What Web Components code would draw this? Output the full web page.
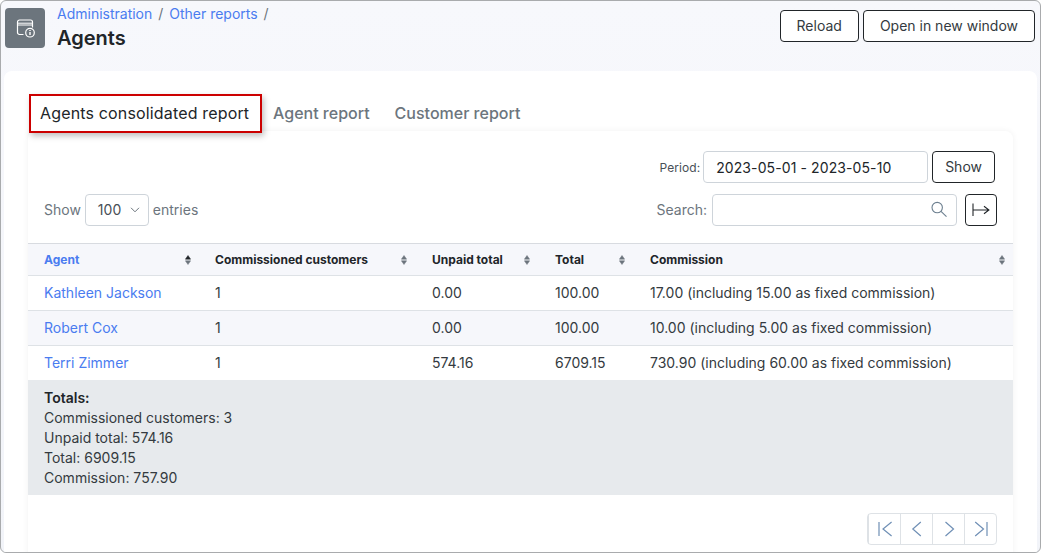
<!DOCTYPE html>
<html>
<head>
<meta charset="utf-8">
<title>Agents</title>
<style>
  html, body { margin: 0; height: 100%; overflow: hidden; }
  body { font-family: Inter, "Liberation Sans", sans-serif; font-size: 14px; color: #212529; background: #fff; }
</style>
</head>
<body>
<app-window>
  <page-header slot="header" parent="Administration" child="Other reports" title="Agents"></page-header>
  <report-tabs>
    <agents-card></agents-card>
  </report-tabs>
</app-window>

<script>
// outer frame: grey border and light background
class AppWindow extends HTMLElement {
  constructor() {
    super();
    this.attachShadow({ mode: 'open' });
    this.shadowRoot.innerHTML = /*html*/ `
      <style>
        :host {
          display: flex;
          flex-direction: column;
          box-sizing: border-box;
          width: 1041px;
          height: 553px;
          border: 1px solid #a9abad;
          border-radius: 6px;
          overflow: hidden;
          background: linear-gradient(#f7f8fc, #f2f4f9);
        }
        .panel {
          flex: 1;
          margin: 0 3px 0 3px;
          padding: 24px 24px 0;
          background: #fff;
          border-radius: 8px 8px 0 0;
          min-height: 0;
        }
      </style>
      <slot name="header"></slot>
      <div class="panel"><slot></slot></div>
    `;
  }
}

class BtnOutline extends HTMLElement {
  constructor() {
    super();
    this.attachShadow({ mode: 'open' });
    this.shadowRoot.innerHTML = /*html*/ `
      <style>
        :host {
          display: inline-flex;
          align-items: center;
          justify-content: center;
          box-sizing: border-box;
          height: 32px;
          padding: 0 16px 1px;
          border: 1px solid #212529;
          border-radius: 4px;
          background: #fff;
          color: #343a40;
          font-size: 14px;
        }
      </style>
      <slot></slot>
    `;
  }
}

class PageHeader extends HTMLElement {
  constructor() {
    super();
    this.attachShadow({ mode: 'open' });
    this.shadowRoot.innerHTML = /*html*/ `
      <style>
        :host {
          display: flex;
          align-items: flex-start;
          height: 70px;
          flex: none;
          padding: 0 5px 0 4px;
          box-sizing: border-box;
        }
        .icon {
          width: 40px;
          height: 40px;
          margin-top: 7px;
          border-radius: 4px;
          background: #6c757d;
          display: flex;
          align-items: center;
          justify-content: center;
          flex: none;
        }
        .text { margin-left: 12px; flex: 1; }
        .crumbs { margin-top: 4px; line-height: 17px; color: #6c757d; font-size: 14px; }
        .crumbs a { color: #4a7cf0; text-decoration: none; }
        .crumbs i { font-style: normal; margin: 0 2px 0 2px; }
        h1 { margin: 3px 0 0; font-size: 20px; line-height: 26px; font-weight: 600; color: #212529; }
        .actions { display: flex; gap: 4px; margin-top: 9px; }
      </style>
      <div class="icon">
        <svg width="20" height="20" viewBox="0 0 20 20" fill="none" stroke="#fff" stroke-width="1.2">
          <path d="M8.5 16.5H4.5a2 2 0 0 1-2-2V4a2 2 0 0 1 2-2h11a2 2 0 0 1 2 2v5.5"/>
          <path d="M2.5 5.2h15" stroke-width="1"/>
          <path d="M2.5 7h15" stroke-width="1"/>
          <circle cx="15" cy="14.7" r="4.3"/>
          <path d="M15 14v3M15 12v1" stroke-width="1.4"/>
        </svg>
      </div>
      <div class="text">
        <div class="crumbs"><a id="p"></a> <i>/</i> <a id="c"></a> <i>/</i></div>
        <h1 id="t"></h1>
      </div>
      <div class="actions">
        <btn-outline>Reload</btn-outline>
        <btn-outline>Open in new window</btn-outline>
      </div>
    `;
  }

  connectedCallback() {
    this.shadowRoot.getElementById('p').textContent = this.getAttribute('parent');
    this.shadowRoot.getElementById('c').textContent = this.getAttribute('child');
    this.shadowRoot.getElementById('t').textContent = this.getAttribute('title');
  }
}

class ReportTabs extends HTMLElement {
  constructor() {
    super();
    this.attachShadow({ mode: 'open' });
    this.shadowRoot.innerHTML = /*html*/ `
      <style>
        :host { display: block; font-size: 16px; }
        .tabs { display: flex; align-items: center; height: 37px; }
        .tab { padding: 0 12px 0 11px; color: #6c757d; font-weight: 500; line-height: 37px; font-size: 16px; }
        .tab:last-child { margin-left: 2px; }
        .tab.active {
          box-sizing: border-box;
          width: 233px;
          height: 39px;
          line-height: 35px;
          margin: 0 0 0 1px;
          padding: 0 0 0 9px;
          border: 2px solid #cc0000;
          color: #212529;
          font-weight: 400;
          letter-spacing: .16px;
          background: #fff;
          box-shadow: 2px 3px 6px rgba(0, 0, 0, 0.25);
          position: relative;
          z-index: 1;
        }
      </style>
      <div class="tabs">
        <div class="tab active">Agents consolidated report</div>
        <div class="tab">Agent report</div>
        <div class="tab">Customer report</div>
      </div>
      <slot></slot>
    `;
  }
}

class SortIcon extends HTMLElement {
  constructor() {
    super();
    this.attachShadow({ mode: 'open' });
    this.shadowRoot.innerHTML = /*html*/ `
      <style>
        :host { display: inline-block; width: 6px; height: 10px; line-height: 0; color: #6c757d; }
        :host([active]) { color: #212529; }
        svg { display: block; }
      </style>
      <svg width="6" height="10" viewBox="0 0 6 10" stroke-linejoin="round">
        <path d="M3 .5 5.6 4.2H.4z" fill="currentColor" stroke="currentColor" stroke-width=".5"/>
        <path d="M3 9.5 5.6 5.8H.4z" fill="#6c757d" stroke="#6c757d" stroke-width=".5"/>
      </svg>
    `;
  }
}

class TablePager extends HTMLElement {
  constructor() {
    super();
    this.attachShadow({ mode: 'open' });
    const icons = ['M3 2v14M15.6 2 7 9l8.6 7', 'M12.8 2 4.8 9l8 7', 'M5.5 2l8 7-8 7', 'M15 2v14M3.2 2l8.3 7-8.3 7'];
    this.shadowRoot.innerHTML = /*html*/ `
      <style>
        :host {
          display: inline-flex;
          height: 32px;
          box-sizing: border-box;
          border: 1px solid #dee2e6;
          border-radius: 4px;
          background: #fff;
        }
        span { width: 31px; display: flex; align-items: center; justify-content: center; border-left: 1px solid #dee2e6; }
        span:first-child { border-left: 0; width: 30px; }
        svg { fill: none; stroke: #6f8fb5; stroke-width: 1.2; }
      </style>
      ${icons.map(d => `<span><svg width="18" height="18" viewBox="0 0 18 18"><path d="${d}"/></svg></span>`).join('')}
    `;
  }
}

class AgentsCard extends HTMLElement {
  constructor() {
    super();
    this.attachShadow({ mode: 'open' });
    const rows = [
      ['Kathleen Jackson', '1', '0.00', '100.00', '17.00 (including 15.00 as fixed commission)'],
      ['Robert Cox', '1', '0.00', '100.00', '10.00 (including 5.00 as fixed commission)'],
      ['Terri Zimmer', '1', '574.16', '6709.15', '730.90 (including 60.00 as fixed commission)']
    ];
    const heads = ['Agent', 'Commissioned customers', 'Unpaid total', 'Total', 'Commission'];
    this.shadowRoot.innerHTML = /*html*/ `
      <style>
        :host {
          display: block;
          margin: -1px 0 0 0;
          width: 985px;
          height: 430px;
          background: #fff;
          border-radius: 8px;
          box-shadow: 0 0 6px rgba(0, 0, 0, 0.06);
          font-size: 14px;
          color: #343a40;
        }
        .period { display: flex; justify-content: flex-end; align-items: center; padding: 20px 18px 0 0; height: 32px; }
        .period label { font-size: 12px; color: #495057; margin-right: 3px; letter-spacing: .05px; }
        .field {
          box-sizing: border-box;
          height: 32px;
          border: 1px solid #ced4da;
          border-radius: 4px;
          background: #fff;
          display: flex;
          align-items: center;
        }
        .date { width: 225px; padding-left: 12px; margin-right: 4px; color: #212529; letter-spacing: .1px; }
        .bar { display: flex; align-items: center; padding: 11px 16px 0; height: 32px; color: #6c757d; }
        .bar > span { margin-top: -1px; }
        .bar .select { width: 64px; margin: 0 4px; padding: 0 0 1px 12px; position: relative; color: #495057; }
        .select svg { position: absolute; right: 8px; top: 12px; }
        .bar .grow { flex: 1; }
        .search { width: 245px; margin: 0 8px 0 5px; position: relative; }
        .search svg { position: absolute; right: 9px; top: 6px; }
        table { width: 985px; margin-top: 17px; border-collapse: collapse; table-layout: fixed; }
        th {
          height: 31px;
          padding: 0 0 0 16px;
          background: #f6f7fb;
          border-top: 1px solid #d8dbe0;
          border-bottom: 1px solid #dee2e6;
          font-size: 12px;
          font-weight: 700;
          color: #212529;
          text-align: left;
        }
        th:first-child { color: #4a7cf0; }
        th div { display: flex; justify-content: space-between; align-items: center; padding-right: 9px; }
        th:first-child div, th:last-child div { padding-right: 8px; }
        td { height: 35px; padding: 0 0 1px 16px; box-sizing: border-box; border-bottom: 1px solid #dee2e6; color: #343a40; }
        tr:nth-child(even) td { background: #f6f7fb; }
        tbody tr:last-child td { border-bottom: 0; height: 34px; padding-bottom: 0; }
        td a { color: #4a7cf0; }
        .totals {
          background: #e7eaed;
          padding: 8px 16px 7px;
          line-height: 20px;
          height: 115px;
          box-sizing: border-box;
          color: #343a40;
        }
        .totals b { font-weight: 600; color: #212529; }
        .foot { display: flex; justify-content: flex-end; padding: 18px 16px 0 0; }
      </style>
      <div class="period">
        <label>Period:</label>
        <div class="field date">2023-05-01 - 2023-05-10</div>
        <btn-outline style="padding:0 12px 1px">Show</btn-outline>
      </div>
      <div class="bar">
        <span>Show</span>
        <div class="field select">100
          <svg width="10" height="6" viewBox="0 0 10 6" fill="none" stroke="#6c757d"><path d="M1 .8 5 4.8 9 .8"/></svg>
        </div>
        <span>entries</span>
        <div class="grow"></div>
        <span>Search:</span>
        <div class="field search">
          <svg width="16" height="16" viewBox="0 0 16 16" fill="none" stroke="#6c7f8f" stroke-width="1.1"><circle cx="6.2" cy="6.6" r="5.2"/><path d="M10 10.4 15.5 15.6"/></svg>
        </div>
        <btn-outline style="padding:0;width:32px">
          <svg width="18" height="14" viewBox="0 0 18 14" fill="none" stroke="#212529" stroke-width="1.1"><path d="M1 .5v12.5M1.5 7H17M12 3.2 16.9 7 12 10.8"/></svg>
        </btn-outline>
      </div>
      <table>
        <colgroup><col style="width:171px"><col style="width:217px"><col style="width:123px"><col style="width:95px"><col></colgroup>
        <thead><tr>${heads.map((h, i) => `<th><div>${h}<sort-icon${i === 0 ? ' active' : ''}></sort-icon></div></th>`).join('')}</tr></thead>
        <tbody>
          ${rows.map(r => `<tr><td><a>${r[0]}</a></td>${r.slice(1).map(c => `<td>${c}</td>`).join('')}</tr>`).join('')}
        </tbody>
      </table>
      <div class="totals">
        <b>Totals:</b><br>
        Commissioned customers: 3<br>
        Unpaid total: 574.16<br>
        Total: 6909.15<br>
        Commission: 757.90
      </div>
      <div class="foot"><table-pager></table-pager></div>
    `;
  }
}

customElements.define('app-window', AppWindow);
customElements.define('btn-outline', BtnOutline);
customElements.define('page-header', PageHeader);
customElements.define('report-tabs', ReportTabs);
customElements.define('sort-icon', SortIcon);
customElements.define('table-pager', TablePager);
customElements.define('agents-card', AgentsCard);
</script>
</body>
</html>
